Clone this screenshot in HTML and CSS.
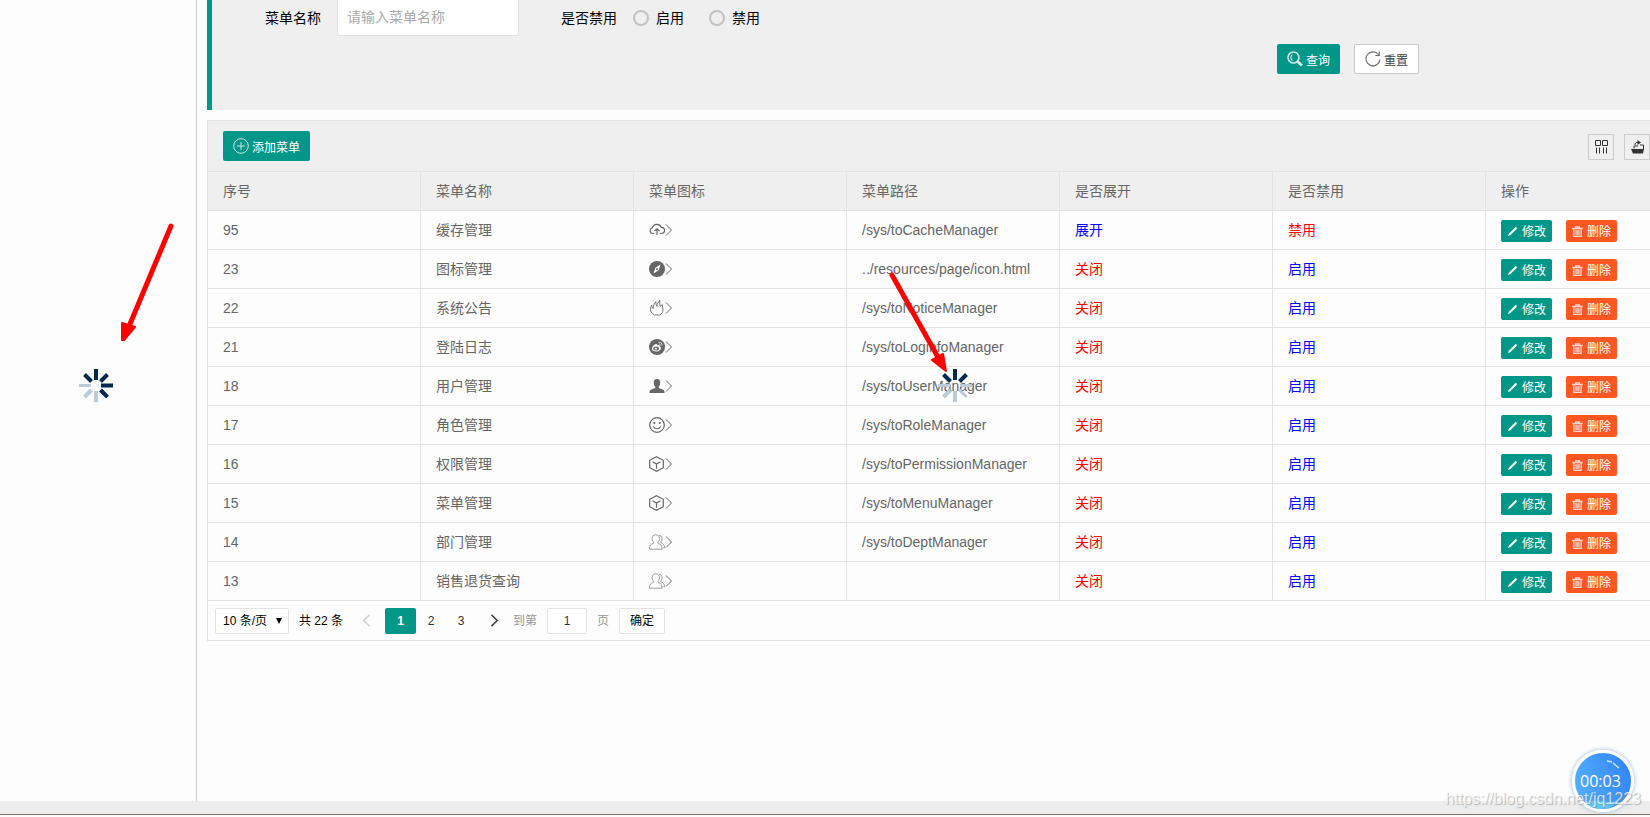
FILE: index.html
```
<!DOCTYPE html>
<html lang="zh-CN">
<head>
<meta charset="utf-8">
<title>菜单管理</title>
<link rel="stylesheet" href="styles.css">
</head>
<body>
<svg class="defs" aria-hidden="true">
  <symbol id="cloud" viewBox="0 0 16 16"><path d="M5 11.500H3.500a2.800 2.800 0 0 1-.2-5.500A4.700 4.700 0 0 1 12.200 5.300a3.100 3.100 0 0 1 .500 6.200H11M8 13V7.500M5.500 9 8 6.700l2.500 2.300" fill="none" stroke="currentColor" stroke-width="1.200"/></symbol>
  <symbol id="compass" viewBox="0 0 16 16"><circle cx="8" cy="8" r="8" fill="currentColor"/><path d="M11.500 3.500 9.600 9.200 4.500 12.500 6.400 6.800Z" fill="#fff"/><circle cx="8" cy="8" r="1" fill="currentColor"/></symbol>
  <symbol id="fire" viewBox="0 0 16 16"><path d="M5.500 15C2.500 13.500 1 10.800 1.700 8c.2-1.200.6-2 1-2.800.2 1.300.7 2.200 1.500 3.300C4.300 6 5 3.500 7 1.700c-.2 2.200.2 3.300.9 4.600C8.300 4 9 2 11 .6c-.5 2.600-.2 4.300.5 6 .5-.8.900-1.400 1.800-2-.2 1.700.6 2.800.7 4.900.1 2.500-1.200 4.500-3.500 5.500Z" fill="none" stroke="currentColor" stroke-width=".9"/></symbol>
  <symbol id="weibo" viewBox="0 0 16 16"><circle cx="8" cy="8" r="8" fill="currentColor"/><path d="M6.700 5c1-.3 1.500.2 1.300 1.200 1.500-.6 3-.3 2.600 1.200 3 1.200.7 5.100-3.600 5.100C3.500 12.500 2 10.500 3.400 8.100 4.200 6.700 5.400 5.400 6.700 5Z" fill="#fff"/><ellipse cx="7.100" cy="9.600" rx="2.900" ry="2" fill="currentColor"/><circle cx="6.800" cy="9.700" r="1.100" fill="#fff"/><path d="M9.700 3.300c2.200-.4 3.700 1.200 3.200 3.300M9.900 5c1-.1 1.500.5 1.300 1.400" fill="none" stroke="#fff" stroke-width=".8"/></symbol>
  <symbol id="user" viewBox="0 0 16 16"><path d="M8 1c2.300 0 3.500 1.500 3.200 4-.1 1.700-.6 2.800-1.400 3.600v1.300c1.700.6 3.500 1.100 5 2 .6.600.7 1.700.7 3.100H.5c0-1.400.1-2.500.7-3.100 1.500-.9 3.300-1.400 5-2V8.600C5.400 7.800 4.900 6.700 4.800 5 4.500 2.500 5.700 1 8 1Z" fill="currentColor"/></symbol>
  <symbol id="smile" viewBox="0 0 16 16"><g fill="none" stroke="currentColor" stroke-width="1.200"><circle cx="8" cy="8" r="7.300"/><path d="M4.300 9.500c1.500 3 5.900 3 7.400 0"/></g><circle cx="5.300" cy="6" r="1.100" fill="currentColor"/><circle cx="10.700" cy="6" r="1.100" fill="currentColor"/></symbol>
  <symbol id="cube" viewBox="0 0 16 16"><path d="m7.500.7 6.800 3.600v7.400l-6.800 3.600-6.800-3.600V4.300ZM3.500 5.800l4 2.300 4-2.300M7.500 8.100v4.600" fill="none" stroke="currentColor" stroke-width="1.200"/></symbol>
  <symbol id="group" viewBox="0 0 16 16"><path d="M.5 15.200c-.2-3.400 1-4.800 3.700-5.700.7-.3.700-.9.300-1.400C3.500 7 3 5.800 3.100 4.300 3.300 2 4.800.8 6.800.8s3.500 1.200 3.700 3.500c.1 1.500-.4 2.700-1.400 3.800-.4.500-.4 1.100.3 1.400 2.700.9 3.900 2.300 3.700 5.700ZM10 1.500c1.900-.1 3 1.100 3.100 3 0 1.400-.4 2.300-1.100 3.200-.4.500-.3 1 .3 1.300 2.100.8 3.400 2.300 3.200 4.800h-1.200" fill="none" stroke="currentColor" stroke-width=".8" opacity=".8"/></symbol>
  <symbol id="arrow" viewBox="0 0 8 12"><path d="M1 .5 6.500 6 1 11.500" fill="none" stroke="currentColor"/></symbol>
  <symbol id="chevron" viewBox="0 0 8 12"><path d="M1.200.8 6.500 6 1.200 11.200" fill="none" stroke="currentColor" stroke-width="1.500"/></symbol>
  <symbol id="pencil" viewBox="0 0 12 12"><path d="M1 11 2 8.500 8.800 1.500C9.800.5 11.500 2.200 10.500 3.200L3.500 10Z" fill="currentColor"/></symbol>
  <symbol id="trash" viewBox="0 0 12 12"><path d="M.3 2.700h11.400M4 2.500V1h4v1.500M2 3v8.300h8V3" fill="none" stroke="currentColor" stroke-width="1.500"/><path d="M3.500 4.500h5V10h-5Z" fill="currentColor" opacity=".75"/></symbol>
  <symbol id="plus" viewBox="0 0 16 16"><path d="M8 .7a7.300 7.300 0 1 0 0 14.600A7.300 7.300 0 0 0 8 .7ZM8 4v8M4 8h8" fill="none" stroke="currentColor"/></symbol>
  <symbol id="search" viewBox="0 0 16 16"><circle cx="6.500" cy="6.500" r="5.500" fill="none" stroke="currentColor" stroke-width="1.600"/><path d="M5.500 9.500C3.300 7.800 3.300 4.900 5.500 3.500" fill="none" stroke="currentColor" stroke-width="1.200"/><path d="m10.500 10.500 4.500 4" stroke="currentColor" stroke-width="3"/></symbol>
  <symbol id="refresh" viewBox="0 0 16 16"><path d="M13.500 3.500A7 7 0 1 0 15 8.500M14.300.5v4h-4" fill="none" stroke="currentColor" stroke-width="1.100"/></symbol>
  <symbol id="columns" viewBox="0 0 16 16"><path d="M2.500 1.500h5v5h-5ZM9.500 1.500h5v5h-5Z" fill="none" stroke="currentColor"/><path d="M3.500 8.500v6M6.500 8.500v6M10.500 8.500v6M13.500 8.500v6" stroke="currentColor"/></symbol>
  <symbol id="export" viewBox="0 0 16 16"><path d="M2 10h13l-1 4.500H4Z" fill="currentColor"/><path d="M5 9.500V7h4M11 6h3.500v5M6 6c0-2 1-2.500 3-2.500" fill="none" stroke="currentColor"/><path d="m8.500 1 3.500 2.500L8.500 6Z" fill="currentColor"/></symbol>
  <symbol id="spokes" viewBox="0 0 36 36"><g stroke-width="4"><path d="M18 13V2M22.500 14.500 29.500 7.500M13.500 14.500 6.500 7.500" stroke="#002850"/><path d="M18 24v11M13.500 23 6.500 30" stroke="#bccada"/></g></symbol>
</svg>
<div class="shell">
  <aside class="sidebar"></aside>
  <main class="main">
    <form class="filter">
      <div class="fields">
        <label class="name-label" for="name">菜单名称</label>
        <input class="name-input" id="name" type="text" placeholder="请输入菜单名称">
        <span class="state-label">是否禁用</span>
        <label class="choice"><input type="radio" name="state"><span>启用</span></label>
        <label class="choice"><input type="radio" name="state"><span>禁用</span></label>
      </div>
      <div class="actions">
        <button class="btn" type="button"><svg><use href="#search"/></svg><span>查询</span></button>
        <button class="btn plain" type="reset"><svg><use href="#refresh"/></svg><span>重置</span></button>
      </div>
    </form>
    <section class="grid">
      <div class="toolbar">
        <button class="btn" type="button"><svg><use href="#plus"/></svg><span>添加菜单</span></button>
        <div class="tools">
          <button class="tool" type="button" aria-label="筛选列"><svg><use href="#columns"/></svg></button>
          <button class="tool" type="button" aria-label="导出"><svg><use href="#export"/></svg></button>
        </div>
      </div>
      <table class="menus">
        <thead><tr><th>序号</th><th>菜单名称</th><th>菜单图标</th><th>菜单路径</th><th>是否展开</th><th>是否禁用</th><th>操作</th></tr></thead>
        <tbody id="rows"></tbody>
      </table>
      <div class="pager">
        <span class="size"><select aria-label="每页条数"><option>10 条/页</option></select></span>
        <span class="total">共 22 条</span>
        <button class="turn off" type="button" aria-label="上一页" disabled><svg><use href="#chevron"/></svg></button>
        <a class="page current" href="#">1</a>
        <a class="page" href="#">2</a>
        <a class="page" href="#">3</a>
        <button class="turn next" type="button" aria-label="下一页"><svg><use href="#chevron"/></svg></button>
        <label class="skip" for="skip">到第</label>
        <input class="skip-input" id="skip" type="text" value="1">
        <span class="skip">页</span>
        <button class="confirm" type="button">确定</button>
      </div>
    </section>
  </main>
</div>
<footer class="footer"></footer>
<svg class="overlay" aria-hidden="true">
  <use href="#spokes" x="78" y="367" width="36" height="36"/>
  <path d="M101 385.500h12M100.500 390l7 7" stroke="#002850" stroke-width="4"/>
  <path d="M79 385.500h12" stroke="#bccada" stroke-width="3"/>
  <use href="#spokes" x="937" y="367" width="36" height="36"/>
  <path d="M938 385.500h12M960 385.500h12M959.500 390l7 7" stroke="#bccada" stroke-width="3"/>
  <g fill="red" stroke="red" stroke-linejoin="round" stroke-linecap="round">
    <path d="M171 226 130 324M892 275l47 84" stroke-width="5"/>
    <path d="m122 323 13 4-11 13-2 0ZM932 360l11-6 3 17Z" stroke-width="2"/>
  </g>
</svg>
<div class="timer"><span>00:03</span><svg viewBox="0 0 56 56"><path d="M32 8l5 1M38 10l6 5" stroke="#cfeaff" stroke-width="1.500" fill="none"/><path d="M10 49c12-4 22 3 34-2-8 11-26 12-34 2Z" fill="#5fc8ff"/></svg></div>
<div class="watermark">https://blog.csdn.net/jq1223</div>
<script src="rows.js"></script>
</body>
</html>
```
FILE: styles.css
```
* { box-sizing: border-box; }
html, body { height: 100%; }
body { margin: 0; display: flex; flex-direction: column; overflow: hidden; background: #fdfdfd; color: #000; font: 14px/24px "Liberation Sans", "Noto Sans CJK SC", sans-serif; }
button, input, select { font: inherit; margin: 0; }
button { cursor: pointer; }
svg { display: block; flex: none; width: 16px; height: 16px; }
.defs { position: absolute; width: 0; height: 0; }
.shell { flex: 1; display: flex; min-height: 0; }
.sidebar { flex: none; width: 197px; border-right: 1px solid #ccc; }
.main { flex: 1; min-width: 0; padding-left: 10px; overflow: hidden; }
.footer { height: 16px; border-bottom: 2px solid #fdfdfd; background: #ededed; box-shadow: inset 0 -1px #7d7060; }

.filter { height: 110px; margin-bottom: 10px; border-left: 5px solid #009688; background: #efefef; }
.fields { display: flex; align-items: center; height: 36px; padding-left: 53px; }
.name-label { width: 72px; }
.name-input { align-self: flex-end; width: 182px; height: 38px; margin-right: 42px; padding: 0 9px; border: 1px solid #e2e2e2; border-radius: 2px; background: #fff; }
.name-input::placeholder { color: #a9a9a9; opacity: 1; }
.state-label { width: 72px; }
.choice { display: flex; align-items: center; gap: 7px; width: 76px; }
.choice input { appearance: none; width: 16px; height: 16px; border: 2px solid #c2c2c2; border-radius: 50%; }
.actions { display: flex; justify-content: flex-end; gap: 14px; padding: 8px 231px 0 0; }
.btn { display: inline-flex; align-items: center; gap: 3px; height: 30px; padding: 0 10px; border: 0; border-radius: 2px; background: #009688; color: #fff; font-size: 12px; white-space: nowrap; }
.btn span { padding-top: 4px; }
.btn svg { opacity: .8; }
.btn.plain { border: 1px solid #c9c9c9; background: #fff; color: #444; }

.grid { border: 1px solid #e2e2e2; border-right: 0; }
.toolbar { display: flex; justify-content: space-between; align-items: flex-start; height: 50px; padding: 10px 0 0 15px; background: #efefef; }
.tools { display: flex; gap: 10px; padding-top: 3px; }
.tool { display: grid; place-items: center; width: 26px; height: 26px; padding: 0; border: 1px solid #ccc; background: none; color: #333; }
.menus { width: 100%; table-layout: fixed; border-collapse: separate; border-spacing: 0; color: #666; }
.menus th, .menus td { height: 39px; padding: 0 0 0 15px; border-top: 1px solid #e2e2e2; border-right: 1px solid #e2e2e2; text-align: left; font-weight: 400; white-space: nowrap; }
.menus th { width: 213px; background: #efefef; }
.menus th:last-child { width: auto; }
.menus th:last-child, .menus td:last-child { border-right: 0; }
.glyph { display: flex; align-items: center; }
.glyph svg + svg { width: 8px; height: 12px; }
.menus .red { color: red; }
.menus .blue { color: blue; }
.ops { display: flex; gap: 14px; padding-top: 2px; }
.op { display: flex; align-items: center; gap: 4px; width: 51px; height: 22px; padding: 0 6px; border: 0; border-radius: 2px; background: #009688; color: #fff; font-size: 12px; }
.op svg { width: 11px; height: 11px; }
.op span { padding-top: 2px; }
.op.del { background: #ff5722; }
.op.del svg { opacity: .75; }

.pager { display: flex; align-items: center; height: 40px; padding: 0 7px; border-top: 1px solid #e2e2e2; color: #333; font-size: 12px; white-space: nowrap; }
.size { display: grid; grid-template-columns: 1fr auto; align-items: center; width: 74px; height: 26px; padding-right: 6px; border: 1px solid #e2e2e2; border-radius: 2px; background: #fff; color: #000; }
.size::after { content: ""; border: 3px solid transparent; border-top: 6px solid #000; border-bottom: 0; }
.size select { appearance: none; width: 100%; padding: 0 0 0 7px; border: 0; background: none; color: inherit; }
.total { width: 54px; padding-left: 10px; color: #000; }
.turn { display: grid; place-items: center; width: 42px; height: 26px; padding: 0 0 0 4px; border: 0; background: none; color: #444; }
.turn svg { width: 9px; height: 13px; }
.turn.off { color: #d2d2d2; }
.turn.off svg { transform: scaleX(-1); }
.turn.next { width: 37px; padding: 0; }
.page { width: 30px; line-height: 26px; text-align: center; color: #333; text-decoration: none; }
.page.current { width: 31px; border-radius: 2px; background: #009688; color: #fff; font-weight: 700; }
.skip { color: #999; }
.skip-input { width: 40px; height: 26px; margin: 0 10px; padding: 0; border: 1px solid #e2e2e2; border-radius: 2px; background: #fff; color: #333; text-align: center; }
.confirm { width: 46px; height: 26px; margin-left: 10px; padding: 0; border: 1px solid #e2e2e2; border-radius: 2px; background: #fff; }

.overlay { position: absolute; inset: 0; width: 100%; height: 100%; pointer-events: none; fill: none; }
.timer { position: absolute; right: 16px; bottom: 5px; width: 62px; height: 62px; border: 3px solid #fff; border-radius: 50%; background: linear-gradient(70deg, #57b5ff, #2f80f8); box-shadow: 0 0 5px #9bb8cc; color: #fff; font: 16px/56px "Open Sans", sans-serif; }
.timer span { padding-left: 5px; }
.timer svg { position: absolute; inset: 0; width: 56px; height: 56px; }
.watermark { position: absolute; right: 9px; bottom: 6px; color: rgba(255, 255, 255, .7); font-size: 16px; text-shadow: 1px 1px 1px rgba(120, 120, 120, .5); }
```
FILE: rows.js
```
const menus = [
  [95, "缓存管理", "cloud", "/sys/toCacheManager", true, true],
  [23, "图标管理", "compass", "../resources/page/icon.html", false, false],
  [22, "系统公告", "fire", "/sys/toNoticeManager", false, false],
  [21, "登陆日志", "weibo", "/sys/toLoginfoManager", false, false],
  [18, "用户管理", "user", "/sys/toUserManager", false, false],
  [17, "角色管理", "smile", "/sys/toRoleManager", false, false],
  [16, "权限管理", "cube", "/sys/toPermissionManager", false, false],
  [15, "菜单管理", "cube", "/sys/toMenuManager", false, false],
  [14, "部门管理", "group", "/sys/toDeptManager", false, false],
  [13, "销售退货查询", "group", "", false, false]
];
document.getElementById("rows").innerHTML = menus.map(([id, name, icon, path, open, disabled]) => `
  <tr>
    <td>${id}</td><td>${name}</td>
    <td><span class="glyph"><svg><use href="#${icon}"/></svg><svg><use href="#arrow"/></svg></span></td>
    <td>${path}</td>
    <td class="${open ? "blue" : "red"}">${open ? "展开" : "关闭"}</td>
    <td class="${disabled ? "red" : "blue"}">${disabled ? "禁用" : "启用"}</td>
    <td><div class="ops">
      <button class="op" type="button"><svg><use href="#pencil"/></svg><span>修改</span></button>
      <button class="op del" type="button"><svg><use href="#trash"/></svg><span>删除</span></button>
    </div></td>
  </tr>`).join("");
```
